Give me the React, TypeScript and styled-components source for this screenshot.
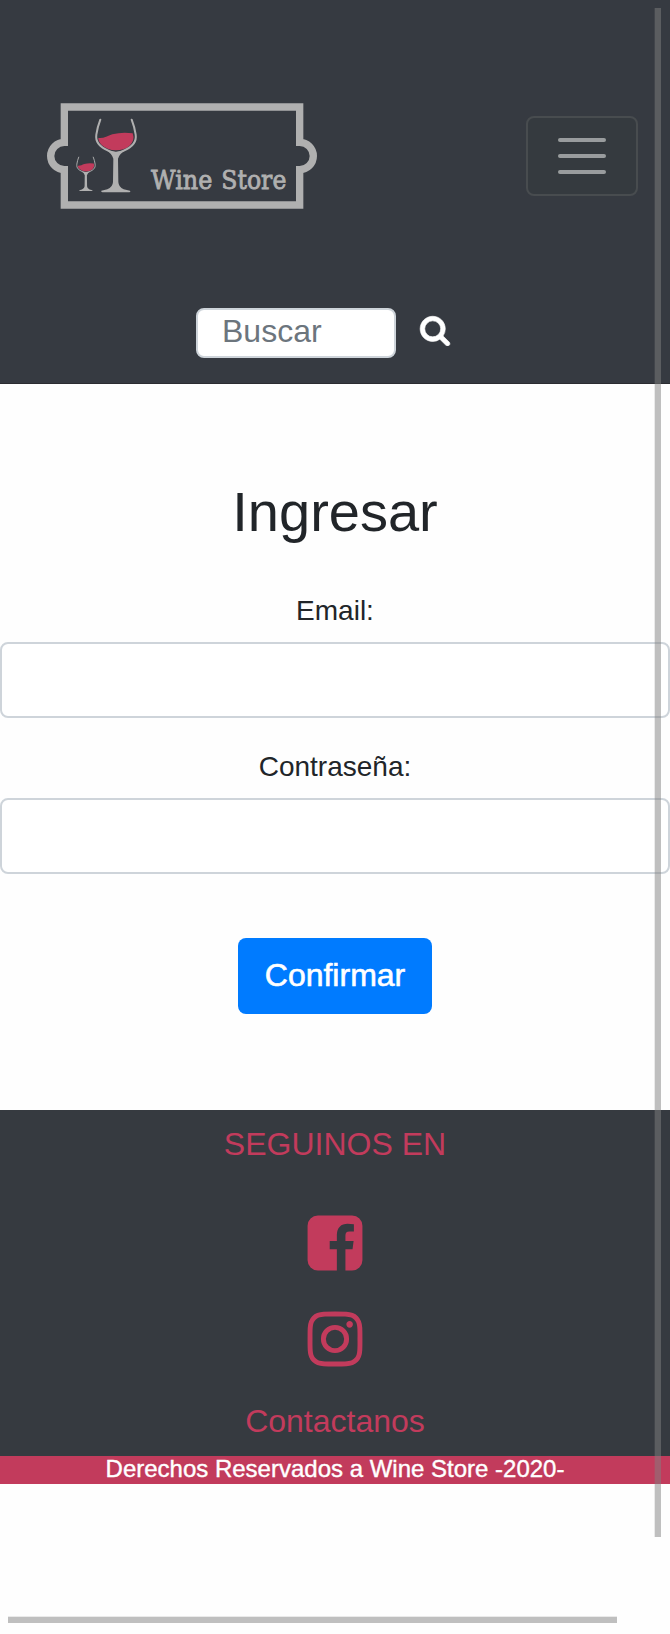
import React from "react";
import styled, { createGlobalStyle } from "styled-components";

const wine = "#c23b5c";
const dark = "#363a41";
const silver = "#b0b0b0";

const GlobalStyle = createGlobalStyle`
  *, *::before, *::after { box-sizing: border-box; }
  body {
    margin: 0;
    background: #fefefe;
    color: #212529;
    font-family: "Liberation Sans", Arial, sans-serif;
    overflow: hidden;
  }
`;

const Page = styled.div`
  position: relative;
  width: 670px;
  height: 1634px;
  overflow: hidden;
`;

const Navbar = styled.header`
  height: 384px;
  background: ${dark};
  border-bottom: 1px solid #2b2c31;
`;

const NavTop = styled.div`
  display: flex;
  align-items: center;
  justify-content: space-between;
  height: 308px;
  padding: 4px 32px 0 40px;
`;

const Toggler = styled.button`
  display: flex;
  flex-direction: column;
  align-items: center;
  justify-content: center;
  gap: 12px;
  width: 112px;
  height: 80px;
  padding: 0;
  border: 2px solid #484c4f;
  border-radius: 8px;
  background: #353a3f;
`;

const TogglerBar = styled.span`
  width: 48px;
  height: 4px;
  border-radius: 2px;
  background: #999c9e;
`;

const SearchForm = styled.form`
  display: flex;
  align-items: flex-start;
  gap: 23px;
  padding-left: 196px;
`;

const SearchButton = styled.button`
  margin: 6px 0 0;
  padding: 0;
  border: 0;
  background: none;
`;

const Field = styled.input<{ $compact?: boolean }>`
  display: block;
  width: ${(p) => (p.$compact ? "200px" : "100%")};
  height: ${(p) => (p.$compact ? "50px" : "76px")};
  padding: ${(p) => (p.$compact ? "0 24px 4px 24px" : "12px 24px")};
  border: 2px solid #ced4da;
  border-radius: 8px;
  outline: none;
  background: #fff;
  color: #495057;
  font: 32px "Liberation Sans", Arial, sans-serif;
  &::placeholder { color: #6c757d; opacity: 1; }
`;

const Login = styled.main`
  display: flex;
  flex-direction: column;
  align-items: center;
  height: 726px;
  padding-top: 94px;
`;

const Title = styled.h1`
  margin: 0 0 46px;
  font-size: 56px;
  font-weight: 400;
  line-height: 67px;
`;

const Group = styled.div`
  width: 100%;
  margin-bottom: 29px;
`;

const Label = styled.label`
  display: block;
  height: 42px;
  margin-bottom: 9px;
  font-size: 28px;
  line-height: 40px;
  text-align: center;
`;

const Submit = styled.button`
  width: 194px;
  height: 76px;
  margin-top: 35px;
  padding: 0 0 2px;
  border: 0;
  border-radius: 8px;
  background: #007bff;
  color: #fff;
  font: 32px "Liberation Sans", Arial, sans-serif;
  -webkit-text-stroke: 0.6px #fff;
`;

const Footer = styled.footer`
  display: flex;
  flex-direction: column;
  align-items: center;
  height: 346px;
  padding-top: 10px;
  background: #363a40;
  color: ${wine};
  font-size: 32px;
  line-height: 48px;
`;

const Socials = styled.div`
  display: flex;
  flex-direction: column;
  gap: 32px;
  margin: 43px 0 26px;
`;

const Rights = styled.div`
  height: 28px;
  background: ${wine};
  color: #fff;
  font-size: 24px;
  line-height: 26px;
  text-align: center;
  -webkit-text-stroke: 0.4px #fff;
`;

const Scrollbar = styled.div<{ $horizontal?: boolean }>`
  position: absolute;
  ${(p) =>
    p.$horizontal
      ? "left: 8px; top: 1617px; width: 609px; height: 6px; box-shadow: 0 -1px rgba(128,128,128,.16);"
      : "left: 655px; top: 8px; width: 6px; height: 1529px; box-shadow: -1px 0 rgba(128,128,128,.16);"}
  background: rgba(128, 128, 128, 0.5);
`;

type GlyphProps = { path: string; size: number; color: string; weight?: number };

const Glyph = ({ path, size, color, weight = 0 }: GlyphProps) => (
  <svg
    width={size}
    height={size}
    viewBox="0 0 1792 1792"
    fill={color}
    stroke={color}
    strokeWidth={weight}
    style={{ display: "block" }}
  >
    <path d={path} />
  </svg>
);

const searchPath =
  "M1216 832q0-185-131.5-316.5t-316.5-131.5-316.5 131.5-131.5 316.5 131.5 316.5 316.5 131.5 316.5-131.5 131.5-316.5zm512 832q0 52-38 90t-90 38q-54 0-90-38l-343-342q-179 124-399 124-143 0-273.5-55.5t-225-150-150-225-55.5-273.5 55.5-273.5 150-225 225-150 273.5-55.5 273.5 55.5 225 150 150 225 55.5 273.5q0 220-124 399l343 343q37 37 37 90z";
const facebookPath =
  "M1376 128q119 0 203.5 84.5t84.5 203.5v960q0 119-84.5 203.5t-203.5 84.5h-188v-595h199l30-232h-229v-148q0-56 23.5-84t91.5-28l122-1v-207q-63-9-178-9-136 0-217.5 80t-81.5 226v171h-200v232h200v595h-532q-119 0-203.5-84.5t-84.5-203.5v-960q0-119 84.5-203.5t203.5-84.5h960z";
const instagramPath =
  "M1152 896q0-106-75-181t-181-75-181 75-75 181 75 181 181 75 181-75 75-181zm138 0q0 164-115 279t-279 115-279-115-115-279 115-279 279-115 279 115 115 279zm108-410q0 38-27 65t-65 27-65-27-27-65 27-65 65-27 65 27 27 65zm-502-220q-7 0-76.5-.5t-105.5 0-96.5 3-103 10-71.5 18.5q-50 20-88 58t-58 88q-11 29-18.5 71.5t-10 103-3 96.5 0 105.5.5 76.5-.5 76.5 0 105.5 3 96.5 10 103 18.5 71.5q20 50 58 88t88 58q29 11 71.5 18.5t103 10 96.5 3 105.5 0 76.5-.5 76.5.5 105.5 0 96.5-3 103-10 71.5-18.5q50-20 88-58t58-88q11-29 18.5-71.5t10-103 3-96.5 0-105.5-.5-76.5.5-76.5 0-105.5-3-96.5-10-103-18.5-71.5q-20-50-58-88t-88-58q-29-11-71.5-18.5t-103-10-96.5-3-105.5 0-76.5.5zm768 630q0 229-5 317-10 208-124 322t-322 124q-88 5-317 5t-317-5q-208-10-322-124t-124-322q-5-88-5-317t5-317q10-208 124-322t322-124q88-5 317-5t317 5q208 10 322 124t124 322q5 88 5 317z";

const WineGlass = () => (
  <>
    <path
      d="M205 144C220 146 232 139 247 133Q277 125 308 130Q316 151 298 168Q282 181 257 181Q233 181 216 166Q205 156 205 144Z"
      fill={wine}
    />
    <path
      d="M211 89Q202 112 199 134C195 160 213 173 235 182C249 188 256 189 258 190C260 189 267 188 281 182C303 173 321 160 317 134Q314 112 305 89"
      fill="none"
      stroke={silver}
      strokeWidth="6"
      strokeLinecap="round"
    />
    <path
      d="M228 180Q246 191 250 206L249 276Q248 292 232 298L214 302Q212 307 222 307H293Q304 307 300 302L281 298Q266 292 265 276L264 206Q268 191 288 180Q257 190 228 180Z"
      fill={silver}
    />
  </>
);

const LogoWord = styled.text`
  font-family: "DejaVu Serif", serif;
  font-size: 79px;
  fill: ${silver};
  stroke: ${silver};
  stroke-width: 2.5px;
`;

const Logo = () => (
  <svg width="280" height="116" viewBox="30 294 840 348" role="img" aria-label="Wine Store">
    <g transform="translate(0 270)">
      <path
        d="M103 51H809V157A41 41 0 0 1 809 239V345H103V239A41 41 0 0 1 103 157Z"
        fill="none"
        stroke={silver}
        strokeWidth="22"
      />
      <WineGlass />
      <g transform="translate(48 160) scale(.465 .466)">
        <WineGlass />
      </g>
      <LogoWord x="363" y="297" textLength="184" lengthAdjust="spacingAndGlyphs">
        Wine
      </LogoWord>
      <LogoWord x="574" y="297" textLength="195" lengthAdjust="spacingAndGlyphs">
        Store
      </LogoWord>
    </g>
  </svg>
);

export default function App() {
  return (
    <Page>
      <GlobalStyle />
      <Navbar>
        <NavTop>
          <Logo />
          <Toggler type="button" aria-label="Menú">
            <TogglerBar />
            <TogglerBar />
            <TogglerBar />
          </Toggler>
        </NavTop>
        <SearchForm>
          <Field $compact placeholder="Buscar" />
          <SearchButton type="button" aria-label="Buscar">
            <Glyph path={searchPath} size={32} color="#fff" weight={36} />
          </SearchButton>
        </SearchForm>
      </Navbar>
      <Login>
        <Title>Ingresar</Title>
        <Group>
          <Label htmlFor="email">Email:</Label>
          <Field id="email" type="email" />
        </Group>
        <Group>
          <Label htmlFor="password">Contraseña:</Label>
          <Field id="password" type="password" />
        </Group>
        <Submit type="button">Confirmar</Submit>
      </Login>
      <Footer>
        <div>SEGUINOS EN</div>
        <Socials>
          <Glyph path={facebookPath} size={64} color={wine} />
          <Glyph path={instagramPath} size={64} color={wine} />
        </Socials>
        <div>Contactanos</div>
      </Footer>
      <Rights>Derechos Reservados a Wine Store -2020-</Rights>
      <Scrollbar />
      <Scrollbar $horizontal />
    </Page>
  );
}
